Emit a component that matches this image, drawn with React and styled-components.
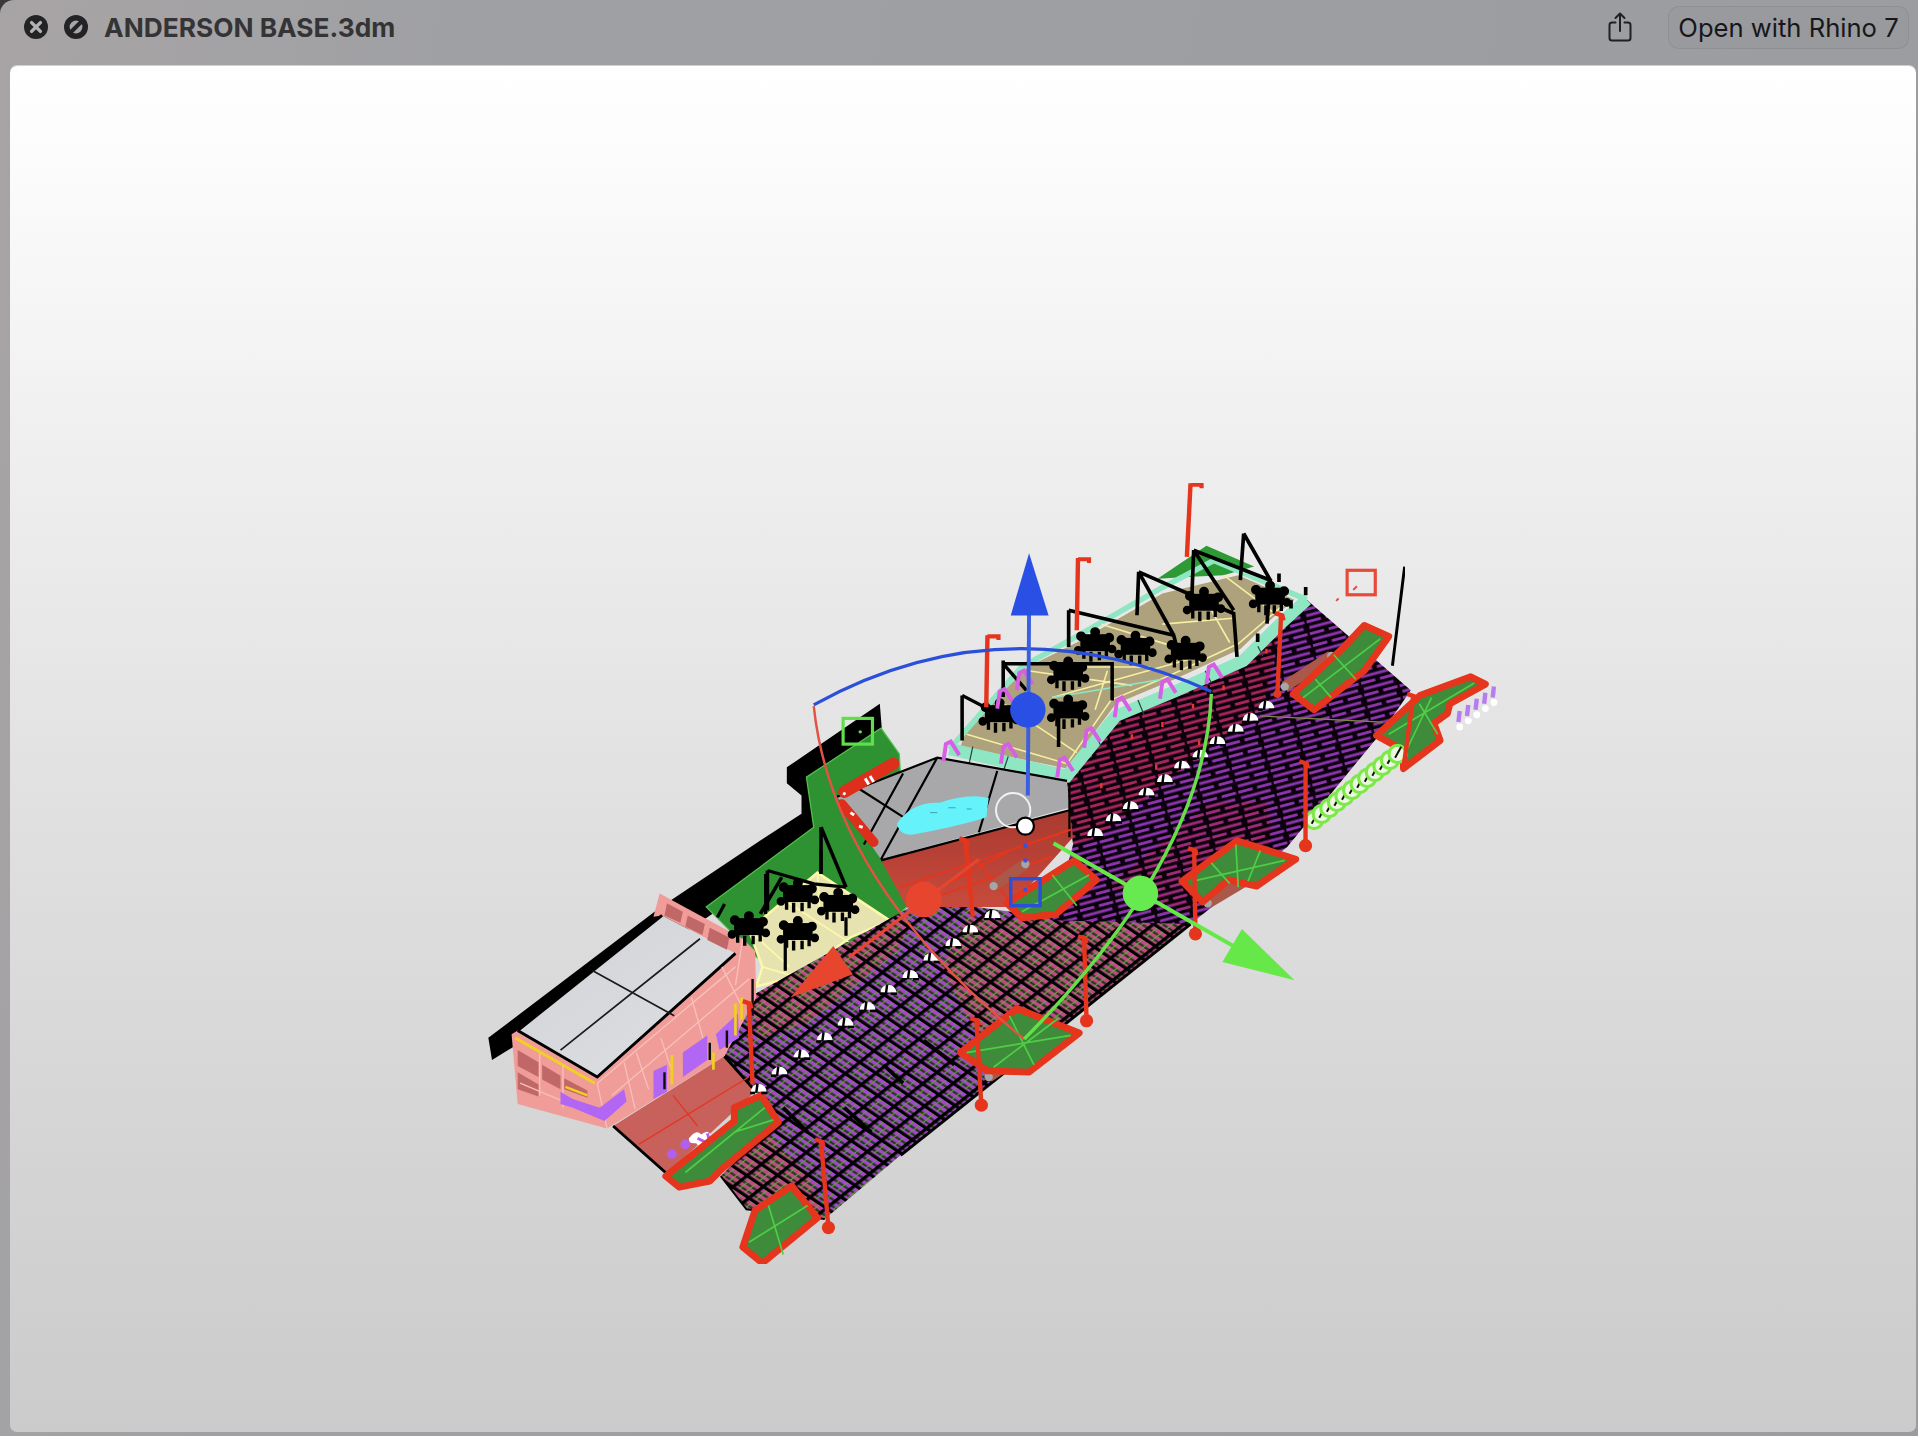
import React from 'react'
import styled, { createGlobalStyle } from 'styled-components'

const GlobalStyle = createGlobalStyle`
  html, body {
    margin: 0;
    padding: 0;
    background: #3a3a3c;
  }
`

const Page = styled.div`
  width: 1918px;
  height: 1436px;
  display: flex;
  flex-direction: column;
  overflow: hidden;
  border-top-left-radius: 14px;
  background: linear-gradient(100deg, #a8a4a5 0%, #9ea0a4 24%, #9b9ca0 100%);
  font-family: Inter, "Liberation Sans", sans-serif;
`
const TitleBar = styled.header`
  height: 66px;
  flex: none;
  display: flex;
  align-items: center;
  justify-content: space-between;
  padding: 0 9px 12px 24px;
  box-sizing: border-box;
`
const TitleGroup = styled.div`
  display: flex;
  align-items: center;
  gap: 16px;
`
const RoundIcon = styled.svg`
  width: 24px;
  height: 24px;
  display: block;
`
const FileName = styled.h1`
  margin: 0;
  font-size: 26.3px;
  font-weight: 700;
  color: #343436;
  letter-spacing: 0;
`
const Actions = styled.div`
  display: flex;
  align-items: center;
  gap: 36px;
`
const ShareButton = styled.button`
  width: 24px;
  height: 30px;
  padding: 0;
  border: 0;
  background: none;
  color: #202024;
`
const OpenButton = styled.button`
  height: 43px;
  width: 241px;
  padding: 0;
  box-sizing: border-box;
  border: 1.5px solid rgba(0, 0, 0, 0.07);
  border-radius: 11px;
  background: rgba(0, 0, 0, 0.015);
  font: 400 25.6px Inter, "Liberation Sans", sans-serif;
  color: #17171b;
  white-space: nowrap;
`
const Viewport = styled.main`
  flex: 1;
  margin: 0 2px 4px 10px;
  border-radius: 7px;
  overflow: hidden;
  background: linear-gradient(180deg, #ffffff 0%, #fbfbfb 8%, #efefef 28%, #e0e0e0 55%, #d4d4d4 80%, #cbcbcb 100%);
  box-shadow: 0 -1px 0 rgba(255, 255, 255, 0.5);
`
const ModelSvg = styled.svg`
  display: block;
  width: 100%;
  height: 100%;
`

const RED = '#e5351f'
const PAD_GREEN = '#3d8b3a'
const PAD_LINE = '#4fce45'

const pads = [
  '544,961 600,916 600,905 622,895 636,917 590,955 580,965 555,970',
  '607,1019 617,989 647,969 668,995 623,1032',
  '785,860 831,824 882,844 841,876 807,875',
  '823,738 878,703 896,719 863,747 835,750',
  '966,720 1011,687 1059,702 1027,724 1004,719 983,737',
  '1057,567 1098,529 1115,511 1135,520 1115,548 1074,580',
  '1125,601 1161,568 1202,553 1214,559 1185,575 1183,583 1172,591 1177,605 1147,628 1147,613',
]

const padLines = [
  'M560,958 L625,905 M600,925 L632,915',
  'M612,1015 L660,985 M628,985 L640,1025',
  'M790,860 L875,846 M825,830 L845,870 M812,872 L865,832',
  'M835,745 L890,715 M860,715 L880,740',
  'M975,720 L1050,703 M1010,690 L1012,725 M990,705 L1005,722 M1030,695 L1020,720',
  'M1065,570 L1128,522 M1090,535 L1108,555 M1075,555 L1088,570',
  'M1135,600 L1205,558 M1160,575 L1175,600 M1150,612 L1170,570',
]

const benches = [
  [808, 880, 838, 860],
  [987, 738, 1024, 716],
  [1050, 561, 1088, 536],
  [812, 724, 838, 706],
]

const posts = [
  { x1: 612, y1: 820, x2: 615, y2: 886 },
  { x1: 671, y1: 933, x2: 677, y2: 1003, ball: true },
  { x1: 886, y1: 767, x2: 888, y2: 834, ball: true },
  { x1: 798, y1: 834, x2: 802, y2: 903, ball: true },
  { x1: 976, y1: 695, x2: 977, y2: 763, ball: true },
  { x1: 1067, y1: 624, x2: 1067, y2: 691, ball: true },
  { x1: 1047, y1: 503, x2: 1044, y2: 567, ball: true, small: true },
  { x1: 973, y1: 395, x2: 970, y2: 455, flag: true },
  { x1: 881, y1: 456, x2: 880, y2: 515, flag: true },
  { x1: 807, y1: 519, x2: 806, y2: 578, flag: true },
  { x1: 789, y1: 687, x2: 795, y2: 749 },
  { x1: 1155, y1: 569, x2: 1147, y2: 628 },
]

const tables = [
  [612, 760], [652, 733], [685, 741], [652, 764],
  [895, 528], [928, 531], [969, 535], [984, 495], [1038, 490],
  [873, 552], [873, 583], [817, 586],
]

const domes = [
  [620, 889], [637, 875], [655, 861], [674, 847], [691, 835], [709, 822], [726, 808], [744, 796],
  [761, 782], [779, 770], [793, 759], [811, 747],
  [895, 680], [910, 668], [924, 658], [937, 647], [952, 636], [966, 625], [981, 616], [995, 605],
  [1010, 595], [1022, 586], [1035, 576],
]

const hooks = [
  [776, 608], [823, 610], [869, 621], [891, 597], [916, 572], [953, 557], [991, 545], [836, 550], [820, 565],
]

const greenRings = Array.from({ length: 12 }, (_, i) => [1074 + i * 6.2, 670 - i * 4.9])

const lavenderTicks = [1192, 1199, 1206, 1213, 1220]

function Table({ x, y }) {
  return (
    <g transform={`translate(${x} ${y}) scale(1.15)`} fill="#000" stroke="#000">
      <rect x="-10" y="-8" width="20" height="11" strokeWidth="1" />
      <circle cx="-10" cy="-7" r="3" />
      <circle cx="0" cy="-10" r="3" />
      <circle cx="10" cy="-6" r="3" />
      <circle cx="-12" cy="3" r="2.6" />
      <circle cx="12" cy="2" r="2.6" />
      <path d="M-8,3 V9 M-3,4 V11 M3,4 V10 M8,3 V8" strokeWidth="2.4" fill="none" />
    </g>
  )
}

function Post({ x1, y1, x2, y2, ball, flag, small }) {
  return (
    <g stroke={RED} fill={RED}>
      <line x1={x1} y1={y1} x2={x2} y2={y2} strokeWidth="3.6" />
      {flag && <path d={`M${x1},${y1 + 1} H${x1 + 9} V${y1 + 4}`} strokeWidth="3.4" fill="none" />}
      {!flag && <path d={`M${x1 - 5},${y1 - 2} L${x1 + 1},${y1} L${x1 + 2},${y1 + 4}`} strokeWidth="3.6" fill="none" />}
      {ball && <circle cx={x2} cy={y2} r={small ? 3.4 : 5.4} stroke="none" />}
    </g>
  )
}

function Dome({ x, y }) {
  return (
    <g>
      <path d={`M${x - 6.4},${y + 3} A6.4,6.4 0 0 1 ${x + 6.4},${y + 3} Z`} fill="#fff" />
      <path d={`M${x - 1},${y - 3.5} L${x - 2},${y + 4} M${x - 7},${y + 4} H${x - 3} M${x + 2},${y + 4} H${x + 7}`} stroke="#000" strokeWidth="2" fill="none" />
    </g>
  )
}

function ModelDrawing() {
  return (
    <ModelSvg viewBox="8 54 1558 1116" preserveAspectRatio="none" role="img" aria-label="3D model viewport">
      <defs>
        <filter id="soft" x="0" y="0" width="100%" height="100%">
          <feGaussianBlur stdDeviation="0.55" />
        </filter>
        <pattern id="gridPurple" patternUnits="userSpaceOnUse" width="15" height="16" patternTransform="matrix(.78 -.62 .83 .56 0 0)">
          <rect width="15" height="16" fill="#a545cc" />
          <rect x="4.6" width="1.9" height="16" fill="#1f3a14" />
          <rect x="9.6" width="1.9" height="16" fill="#1f3a14" />
          <rect y="5.5" width="15" height="1" fill="#5f9a3e" />
          <rect y="11" width="15" height="1" fill="#5f9a3e" />
          <rect width="2.8" height="16" fill="#000" />
          <rect width="15" height="2.8" fill="#000" />
        </pattern>
        <pattern id="gridPink" patternUnits="userSpaceOnUse" width="15" height="16" patternTransform="matrix(.78 -.62 .83 .56 0 0)">
          <rect width="15" height="16" fill="#c04a88" />
          <rect x="4.6" width="1.9" height="16" fill="#1f3a14" />
          <rect x="9.6" width="1.9" height="16" fill="#1f3a14" />
          <rect y="5.5" width="15" height="1" fill="#6ca044" />
          <rect y="11" width="15" height="1" fill="#6ca044" />
          <rect width="2.8" height="16" fill="#000" />
          <rect width="15" height="2.8" fill="#000" />
        </pattern>
        <pattern id="dashPurple" patternUnits="userSpaceOnUse" width="30" height="10" patternTransform="rotate(-15)">
          <rect width="30" height="10" fill="#0c0410" />
          <rect x="1" y="1.2" width="25" height="2.3" fill="#8d34ad" />
          <rect x="16" y="6.2" width="12" height="2.3" fill="#8d34ad" />
          <rect x="0" y="6.2" width="12" height="2.3" fill="#8d34ad" />
        </pattern>
        <pattern id="dashCrimson" patternUnits="userSpaceOnUse" width="30" height="10" patternTransform="rotate(-15)">
          <rect width="30" height="10" fill="#0f0308" />
          <rect x="1" y="1.2" width="25" height="2.3" fill="#a82560" />
          <rect x="16" y="6.2" width="12" height="2.3" fill="#a82560" />
          <rect x="0" y="6.2" width="12" height="2.3" fill="#a82560" />
        </pattern>
        <linearGradient id="roofFill" x1="0" y1="0" x2="1" y2="1">
          <stop offset="0" stopColor="#d2d3d6" />
          <stop offset="1" stopColor="#dedfe2" />
        </linearGradient>
        <linearGradient id="plazaRed" x1="0" y1="0" x2="0" y2="1">
          <stop offset="0" stopColor="#a93a30" />
          <stop offset="1" stopColor="#c74a3c" />
        </linearGradient>
      </defs>

      <g filter="url(#soft)">
        {/* back wall */}
        <polygon points="399,848 402,866 425,852 570,755 665,690 700,640 721,600 719,575 643,627 643,640 655,650 655,665 621,687 540,741" fill="#000" />

        {/* left green terrace */}
        <polygon points="577,741 665,676 659,635 720,595 735,616 741,741 729,752 650,800 618,782" fill="#2f9133" stroke="#53c24a" strokeWidth="1" />
        <polygon points="612,760 668,713 727,752 695,766 650,798 618,806 623,790" fill="#e7e3b1" stroke="#fdf9a8" strokeWidth="2" />
        <path d="M623,790 L650,798 M668,713 L670,745 M640,735 L694,770 M612,760 L645,790" stroke="#fdf9a8" strokeWidth="1.4" fill="none" />

        {/* main seating deck */}
        <polygon points="612,815 755,735 826,745 866,750 920,745 973,755 736,944 674,996 610,988 589,961 636,917 618,891 592,863" fill="url(#gridPurple)" />
        <polygon points="612,815 745,742 735,775 660,835 620,850" fill="url(#gridPink)" />
        <polygon points="790,750 973,755 820,877 790,830 770,790" fill="url(#gridPink)" />
        <polygon points="589,961 625,925 660,960 674,996 610,988" fill="url(#gridPink)" />
        <path d="M736,944 L973,755" stroke="#000" strokeWidth="2.4" fill="none" />
        <path d="M589,961 L610,988 L674,996" stroke="#000" strokeWidth="1.6" fill="none" />
        <path d="M690,905 L712,925 M722,870 L738,885 M640,905 L660,925 M755,850 L780,870" stroke="#000" strokeWidth="3" fill="none" />

        {/* upper dark deck */}
        <polygon points="1068,490 1153,564 1131,596 1052,692 973,755 860,752 877,690 872,640 912,585 960,565 1016,540 1045,510" fill="url(#dashPurple)" />
        <polygon points="872,640 912,585 960,565 1016,540 1045,510 1035,575 895,685 877,690" fill="url(#dashCrimson)" />
        <polygon points="905,725 990,655 1035,655 1040,685 970,745" fill="url(#dashCrimson)" opacity=".65" />
        <path d="M1030,585 L1130,590" stroke="#7c8a3a" strokeWidth="1" fill="none" />
        <path d="M885,610 v4 M905,590 v4 M925,600 v4 M950,590 v4 M975,575 v4 M1000,560 v4 M1035,530 v4 M900,640 v4 M945,625 v4 M980,605 v4" stroke="#e8392b" strokeWidth="2" fill="none" />

        {/* upper terrace */}
        <polygon points="946,473 986,446 1025,463 1000,470 978,471" fill="#2f9a36" />
        <polygon points="785,610 872,628 912,575 960,555 1014,530 1040,505 1058,490 1012,470 950,485 880,525 840,545 790,595" fill="#ada27c" />
        <path d="M776,612 L872,634 L912,585 L960,565 L1016,540 L1044,512 L1068,490" stroke="#8fe6c2" strokeWidth="10" fill="none" />
        <path d="M776,612 L835,545 L880,520 L950,480 L992,458 L1068,490" stroke="#8fe6c2" strokeWidth="4.6" fill="none" />
        <path d="M790,600 L872,624 L908,572 L956,552 L1012,526 L1054,490 M820,575 L880,615 M840,548 L925,560 M860,570 L985,535 M900,510 L965,530 M950,510 L1010,505 M985,490 L1005,525 M1000,470 L1040,500 M880,545 L940,545 M905,548 L895,580"
          stroke="#f5efa2" strokeWidth="1.3" fill="none" />
        <path d="M860,570 L950,555" stroke="#8fe6c2" strokeWidth="1.2" fill="none" />
        <path d="M795,610 L792,624 M824,618 L820,630 M895,600 L900,610 M930,572 L935,584 M985,548 L990,558 M1028,528 L1032,536" stroke="#244a3a" strokeWidth="1" fill="none" />

        {/* pool plaza */}
        <polygon points="720,702 684,651 766,619 872,638 874,660" fill="#a8a8ab" />
        <polygon points="720,703 874,662 877,684 826,741 741,741" fill="url(#plazaRed)" />
        <path d="M720,703 L874,662 M684,651 L766,619 L872,638 M766,619 L720,702 M738,632 L706,690 M695,640 L745,672 M815,630 L800,680 M874,640 L874,684" stroke="#000" strokeWidth="1.8" fill="none" />
        <path d="M733,673 Q745,655 768,656 Q790,648 808,652 L806,668 Q780,676 745,682 Q735,682 733,673 Z" fill="#66f2fa" />
        <path d="M760,664 h6 M775,660 h6 M790,661 h4" stroke="#3aa2b0" strokeWidth=".8" fill="none" />
        <path d="M741,741 L860,700 M760,730 L825,695 M735,725 L875,678 M795,700 L830,742" stroke="#e5351f" strokeWidth="1.6" fill="none" />

        {/* red cylinders */}
        <line x1="690" y1="647" x2="730" y2="624" stroke="#de2e1c" strokeWidth="10" strokeLinecap="round" />
        <line x1="688" y1="657" x2="714" y2="688" stroke="#de2e1c" strokeWidth="8" strokeLinecap="round" />
        <path d="M707,636 l3,5 M711,634 l3,5 M695,664 l3,2 M702,675 l3,1 M689,648 l2,1" stroke="#fff" strokeWidth="2.4" fill="none" />

        {/* entrance building */}
        <polygon points="418,845 423,902 496,922 592,863 618,815 617,777 607,767 539,730 534,749 541,748 601,779 488,880 423,842" fill="#f09c99" />
        <polygon points="501,920 592,863 618,891 545,959" fill="#c8615c" />
        <path d="M501,920 L545,959 M592,863 L616,890" stroke="#000" strokeWidth="2.4" fill="none" />
        <path d="M522,935 L612,880 M550,895 L570,920" stroke="#e5351f" strokeWidth="1" fill="none" />
        <path d="M563,930 q6,-8 10,-3 q7,-6 8,3 q3,6 -4,6 q-5,3 -8,-2 q-7,1 -6,-4 Z" fill="#fff" />
        <path d="M570,930 l6,3 M578,926 l2,6" stroke="#b060f0" strokeWidth="2.4" fill="none" />
        <circle cx="549" cy="943" r="4" fill="#b060f0" />
        <circle cx="560" cy="935" r="4" fill="#b060f0" />

        <polygon points="423,842 541,748 601,779 488,880" fill="url(#roofFill)" />
        <path d="M423,842 L541,748 M423,842 L488,880 L601,779" stroke="#000" strokeWidth="2.4" fill="none" />
        <path d="M484,793 L551,830 M458,858 L572,767" stroke="#1a1a1a" strokeWidth="1.4" fill="none" />
        <path d="M421,848 L486,885" stroke="#f0d020" strokeWidth="2.4" fill="none" />
        <g fill="#c06868">
          <polygon points="545,738 558,745 556,754 543,748" />
          <polygon points="562,748 576,755 574,764 560,757" />
          <polygon points="580,758 596,766 594,776 578,768" />
          <polygon points="423,858 440,868 440,880 423,871" />
          <polygon points="443,870 458,879 458,890 443,882" />
          <polygon points="423,876 440,886 440,896 423,890" />
          <polygon points="461,881 480,891 480,897 461,890" />
        </g>
        <path d="M496,922 L488,885 M519,906 L510,868 M425,885 L496,915 M488,885 L601,790 M500,895 L612,800 M575,850 L565,815 M605,820 L590,790 M607,767 L601,805 M441,860 V895 M460,870 V905 M530,890 L520,860 M550,878 L540,848"
          stroke="#f8c0ba" strokeWidth="1.1" fill="none" />
        <g fill="#b266f4">
          <polygon points="458,892 468,898 490,905 510,890 512,900 494,916 468,905 458,902" />
          <polygon points="534,875 545,870 545,892 534,898" />
          <polygon points="558,860 578,846 578,866 558,880" />
          <polygon points="585,845 603,828 604,848 588,858" />
        </g>
        <path d="M549,862 v24 M601,820 v26 M583,860 v14 M606,815 v18" stroke="#f0d020" strokeWidth="2.2" fill="none" />
        <path d="M543,876 v14 M580,852 v14 M594,842 v14 M615,800 v30" stroke="#111" strokeWidth="2" fill="none" />
        <path d="M462,888 L480,895" stroke="#f0d020" strokeWidth="2" fill="none" />

        {/* benches */}
        {benches.map(([x1, y1, x2, y2]) => (
          <g key={`${x1}-${y1}`}>
            <line x1={x1} y1={y1} x2={x2} y2={y2} stroke="#a9594a" strokeWidth="9" />
            <circle cx={x1} cy={y1} r="3.4" fill="#a6a6a6" />
            <circle cx={x2} cy={y2} r="3.4" fill="#a6a6a6" />
          </g>
        ))}

        {/* green pads */}
        {pads.map((points, i) => (
          <polygon key={i} points={points} fill={PAD_GREEN} stroke={RED} strokeWidth="5.6" strokeLinejoin="round" />
        ))}
        {padLines.map((d, i) => (
          <path key={i} d={d} stroke={PAD_LINE} strokeWidth="1.4" fill="none" />
        ))}

        {/* seats */}
        {domes.map(([x, y]) => <Dome key={`${x}-${y}`} x={x} y={y} />)}

        {/* green ring row and lavender ticks */}
        {greenRings.map(([x, y]) => (
          <g key={x}>
            <circle cx={x} cy={y} r="7" fill="#eaf8e0" stroke="#7fe84a" strokeWidth="2.6" />
            <line x1={x - 2} y1={y + 3} x2={x + 3} y2={y - 6} stroke="#111" strokeWidth="1.6" />
          </g>
        ))}
        {lavenderTicks.map((x, i) => (
          <g key={x}>
            <line x1={x} y1={590 - i * 5} x2={x + 1} y2={581 - i * 5} stroke="#b67cf0" strokeWidth="3.6" />
            <circle cx={x + 1} cy={594 - i * 5} r="2.8" fill="#fff" />
          </g>
        ))}

        {/* tents */}
        <g transform="translate(817.5 376) scale(.2725)" stroke="#000" strokeWidth="11" fill="none">
          <path d="M205,450 V560 M205,450 L520,525 L540,600 M415,335 L410,465 M415,335 L520,525 M415,335 L700,460 L710,590 M580,270 L575,400 M580,270 L700,450 M580,270 L810,360 L800,490 M730,220 L720,360 M730,220 L810,360 M836,340 V365 M916,380 V405 M872,420 V445 M772,520 V545" />
        </g>
        <g transform="translate(621.3 441.5) scale(.292 .2725)" stroke="#000" strokeWidth="10" fill="none">
          <path d="M565,465 V600 M565,465 L700,540 M680,360 V470 M680,370 L985,370 V480 M680,370 L745,450 M835,500 V620 M170,860 V1000 M170,860 L240,1040 M20,990 L150,1030 L240,1040 M20,990 V1110 M60,1010 L0,1120" />
        </g>
        <g transform="translate(376 695) scale(.292 .2725)" stroke="#000" strokeWidth="9" fill="none">
          <path d="M855,70 V190 M1010,0 V70 M740,160 L720,200 M910,260 V360 M1080,200 V255" />
        </g>
        {tables.map(([x, y]) => <Table key={`${x}-${y}`} x={x} y={y} />)}

        {/* magenta hooks */}
        {hooks.map(([x, y]) => (
          <path key={`${x}-${y}`} d={`M${x - 5},${y + 14} L${x - 3},${y} L${x + 1},${y - 2} L${x + 8},${y + 9}`} stroke="#d65fe6" strokeWidth="3.2" fill="none" />
        ))}

        {/* posts */}
        {posts.map((post, i) => <Post key={i} {...post} />)}
      </g>

      {/* markers and gizmo */}
      <g filter="url(#soft)">
        <rect x="1101" y="466" width="23" height="20" fill="none" stroke="#e84a3a" strokeWidth="2.6" />
        <path d="M1106,482 l3,-3 M1092,491 l2,-2" stroke="#e84a3a" strokeWidth="1.6" fill="none" />
        <line x1="1148" y1="463" x2="1138" y2="544" stroke="#000" strokeWidth="2.4" />
        <rect x="689" y="587" width="24" height="21" fill="none" stroke="#5fe04a" strokeWidth="2.6" />
        <circle cx="703" cy="598" r="1.4" fill="#5fe04a" />
        <rect x="826" y="718" width="24" height="22" fill="none" stroke="#2a4fd8" strokeWidth="2.8" />

        <path d="M665,577 Q680,720 837,849" stroke="#e25244" strokeWidth="2" fill="none" />
        <path d="M990,567 Q985,700 837,849" stroke="#66e04a" strokeWidth="2.8" fill="none" />
        <path d="M665,576 Q820,490 990,565" stroke="#2a50d8" strokeWidth="2.6" fill="none" />

        <line x1="841" y1="500" x2="840" y2="650" stroke="#3a5fe0" strokeWidth="3.2" />
        <polygon points="841,452 826,503 857,503" fill="#2a50e4" />
        <circle cx="840" cy="580" r="14.5" fill="#2a50e4" />

        <line x1="861" y1="689" x2="1008" y2="773" stroke="#66e84a" strokeWidth="3.2" />
        <polygon points="1015,759 999,786 1058,801" fill="#66e84a" />
        <circle cx="932" cy="730" r="14.5" fill="#66ea50" />

        <line x1="800" y1="702" x2="694" y2="782" stroke="#e8452f" strokeWidth="2.6" />
        <polygon points="681,773 697,796 646,815" fill="#e8452f" />
        <circle cx="755" cy="735" r="14.5" fill="#e8452f" />

        <circle cx="828" cy="662" r="14" fill="none" stroke="#f2f2f2" strokeWidth="1.6" />
        <circle cx="838" cy="675" r="7" fill="#fff" stroke="#000" strokeWidth="1.8" />
        <circle cx="838" cy="691" r="1.8" fill="#3a4fe0" />
        <circle cx="838" cy="703" r="1.8" fill="#3a4fe0" />
        <circle cx="838" cy="727" r="1.6" fill="#3a4fe0" />
      </g>
    </ModelSvg>
  )
}

const App = () => (
  <Page>
    <GlobalStyle />
    <TitleBar>
      <TitleGroup>
        <RoundIcon viewBox="0 0 24 24" aria-label="Close">
          <circle cx="12" cy="12" r="12" fill="#232326" />
          <path d="M7.6,7.6 L16.4,16.4 M16.4,7.6 L7.6,16.4" stroke="#b3b3b6" strokeWidth="3.4" strokeLinecap="round" />
        </RoundIcon>
        <RoundIcon viewBox="0 0 24 24" aria-label="Stop">
          <circle cx="12" cy="12" r="12" fill="#232326" />
          <circle cx="12" cy="12" r="6.4" fill="#a6a7aa" />
          <path d="M6.5,17.5 L17.5,6.5" stroke="#232326" strokeWidth="4" />
        </RoundIcon>
        <FileName>ANDERSON BASE.3dm</FileName>
      </TitleGroup>
      <Actions>
        <ShareButton aria-label="Share">
          <svg width="24" height="30" viewBox="0 0 24 30" fill="none" stroke="currentColor" strokeWidth="2" strokeLinecap="round" strokeLinejoin="round">
            <path d="M7.5,10.5 H4 Q1.5,10.5 1.5,13 V26 Q1.5,28.5 4,28.5 H20 Q22.5,28.5 22.5,26 V13 Q22.5,10.5 20,10.5 H16.5" />
            <path d="M12,19 V1.5 M7.5,6 L12,1.5 L16.5,6" />
          </svg>
        </ShareButton>
        <OpenButton>Open with Rhino 7</OpenButton>
      </Actions>
    </TitleBar>
    <Viewport>
      <ModelDrawing />
    </Viewport>
  </Page>
)

export default App
